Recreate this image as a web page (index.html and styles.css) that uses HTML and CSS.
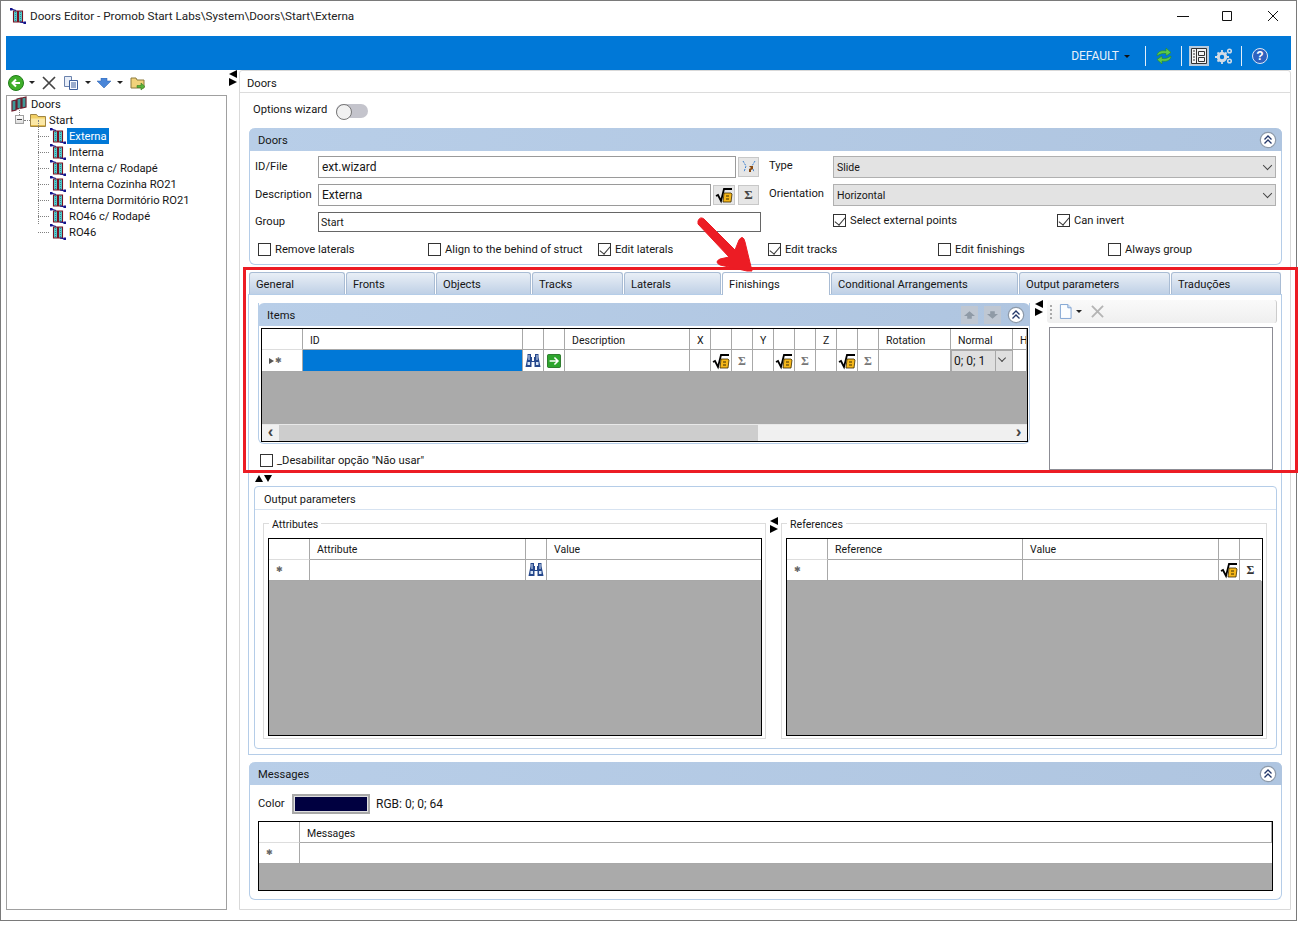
FILE: index.html
```html
<!DOCTYPE html>
<html lang="en">
<head>
<meta charset="utf-8">
<title>Doors Editor</title>
<link rel="stylesheet" href="styles.css">
</head>
<body>
<svg class="sprite" aria-hidden="true">
  <symbol id="door" viewBox="0 0 16 16">
    <path d="M3.500 3h4v11h-4zM8.500 3h4v11h-4z" fill="#58d0d0" stroke="#7a1020" stroke-width="1.100"/>
    <path d="M5.500 4v9M10.500 4v9" stroke="#2a8a9a" stroke-width="1" stroke-dasharray="1 1"/>
    <path d="M1 1l5 1.500M10 14l5 1" stroke="#14148c" stroke-width="1.100"/>
    <path d="M0 0h2.500v2.500H0zM13.500 13.500H16V16h-2.500z" fill="#14148c"/>
  </symbol>
  <symbol id="doors" viewBox="0 0 16 16">
    <path d="M1 5l4-1v10l-4 1zM6 3l4-1v10l-4 1zM11 2l4-1v10l-4 1z" fill="#3f9a98" stroke="#6c1c2c" stroke-width="1.200"/>
  </symbol>
  <symbol id="folder" viewBox="0 0 16 16">
    <path d="M.5 2.500h6l1.500 2h7.500v10H.5z" fill="#f2cf64" stroke="#a08646"/>
    <path d="M1 6.500h14v7.500H1z" fill="#fbe8a6"/>
    <path d="M1 13h14v1H1z" fill="#e2b94a"/>
  </symbol>
  <symbol id="sqrt" viewBox="0 0 18 18">
    <path d="M1 10l2-1 3 6 3-12h8" fill="none" stroke="#000" stroke-width="1.800"/>
    <path d="M9 7h7l1 1-1 8H8z" fill="#f5b71a" stroke="#3a2a00" stroke-width=".8"/>
    <path d="M11 10h3M11 13h3" stroke="#3a2a00" stroke-width="1"/>
  </symbol>
  <symbol id="bino" viewBox="0 0 16 16">
    <path d="M2.500 1h3.500v3h1v4h2V4h1V1h3.500v3l2 10H9.500V9h-3v5H.5l2-10z" fill="#26488c"/>
    <path d="M3.500 2h1v5h-1zM11.500 2h1v5h-1zM2.500 9h2.500v3H2.500zM11 9h2.500v3H11z" fill="#d6e4f6"/>
  </symbol>
  <symbol id="greenarrow" viewBox="0 0 16 16">
    <rect x=".5" y=".5" width="15" height="15" rx="1.500" fill="#2ea52e" stroke="#1c6c1c"/>
    <path d="M3 8h9M8.500 4l4 4-4 4" fill="none" stroke="#fff" stroke-width="1.800"/>
  </symbol>
  <symbol id="collapse" viewBox="0 0 18 18">
    <circle cx="9" cy="9" r="7.700" fill="#fff" stroke="#8d9aaa" stroke-width="1.200"/>
    <path d="M5.500 8.500L9 5l3.500 3.500M5.500 12.500L9 9l3.500 3.500" fill="none" stroke="#24386a" stroke-width="1.300"/>
  </symbol>
</svg>

<div class="window">
  <header class="titlebar">
    <svg class="ico16 title-ico"><use href="#door"/></svg>
    <span class="title-text">Doors Editor - Promob Start Labs\System\Doors\Start\Externa</span>
    <div class="winctl">
      <svg class="winbtn" viewBox="0 0 46 14"><path d="M19 7.500h12" stroke="#111" fill="none"/></svg>
      <svg class="winbtn" viewBox="0 0 46 14"><path d="M18.500 2.500h9v9h-9z" stroke="#111" fill="none"/></svg>
      <svg class="winbtn" viewBox="0 0 46 14"><path d="M18 2l10 10M28 2L18 12" stroke="#111" fill="none"/></svg>
    </div>
  </header>

  <div class="ribbon">
    <span class="rib-text">DEFAULT</span>
    <span class="caret white"></span>
    <span class="rib-sep first"></span>
    <svg class="rib-ico sync" viewBox="0 0 18 18">
      <path d="M2 9c0-4 4-6 9-5V1l5 4.500L11 9V6.500C7 6 5 7 2 9z" fill="#5cc94a" stroke="#2c8a22" stroke-width=".6"/>
      <path d="M16 9c0 4-4 6-9 5v3l-5-4.500L7 9v2.500c4 .5 6-.5 9-2.500z" fill="#5cc94a" stroke="#2c8a22" stroke-width=".6"/>
    </svg>
    <span class="rib-sep"></span>
    <span class="rib-view">
      <svg viewBox="0 0 18 18" class="rib-ico"><path d="M1.500 1.500h15v15h-15z" fill="#f4f4f4" stroke="#333"/><path d="M6.500 1.500v15M8.500 4.500h6v4h-6zM8.500 10.500h6v4h-6z" fill="none" stroke="#333"/><path d="M3 4h2M3 7h2M3 10h2M3 13h2" stroke="#333"/></svg>
    </span>
    <svg class="rib-ico gears" viewBox="0 0 18 18">
      <circle cx="7" cy="10" r="3.700" fill="none" stroke="#d3dce6" stroke-width="3"/>
      <circle cx="14.500" cy="4" r="1.800" fill="none" stroke="#d3dce6" stroke-width="1.500"/>
      <circle cx="14.500" cy="14" r="1.800" fill="none" stroke="#d3dce6" stroke-width="1.500"/>
      <path d="M7 3v3M7 14v3M0 10h3M11 10h3M2.500 5.500l2 2M11.500 5.500l-2 2M2.500 14.500l2-2" stroke="#d3dce6" stroke-width="1.800"/>
    </svg>
    <span class="rib-sep"></span>
    <span class="help">?</span>
  </div>

  <div class="main">
    <aside class="side">
      <div class="side-tools">
        <span class="back"><svg viewBox="0 0 16 16"><circle cx="8" cy="8" r="7.500" fill="#3fae2a" stroke="#1f7d18"/><path d="M12 8H5M8 4.500L4.500 8 8 11.500" fill="none" stroke="#fff" stroke-width="2"/></svg></span>
        <span class="caret t1"></span>
        <svg class="tool-x" viewBox="0 0 14 14"><path d="M1 1l12 12M13 1L1 13" stroke="#444" stroke-width="1.700"/></svg>
        <svg class="tool-copy" viewBox="0 0 16 16"><path d="M1.500 1.500h7v10h-7z" fill="#e8eef8" stroke="#6b82ac"/><path d="M6.500 5.500h8v9h-8z" fill="#f8fbff" stroke="#3d5f9c"/><path d="M8 8h5M8 10h5M8 12h5" stroke="#3d5f9c"/></svg>
        <span class="caret t2"></span>
        <svg class="tool-down" viewBox="0 0 14 10"><path d="M4 0h6v3h4l-7 7-7-7h4z" fill="#4a86d8" stroke="#2b5fae" stroke-width=".5"/></svg>
        <span class="caret t3"></span>
        <svg class="tool-folder" viewBox="0 0 16 16"><path d="M1 3h5l1 2h7v8H1z" fill="#f2d27a" stroke="#8c7a3c"/><path d="M7 10.500h4V8l4 3.500L11 15v-2.500H7z" fill="#59b33b" stroke="#357c22" stroke-width=".6"/></svg>
      </div>
      <div class="tree">
        <div class="node root"><svg class="ico16"><use href="#doors"/></svg><span class="lbl">Doors</span></div>
        <div class="node folder-node">
          <span class="expander"></span>
          <svg class="ico16"><use href="#folder"/></svg><span class="lbl folder-lbl">Start</span>
        </div>
        <div class="children">
          <div class="node child"><svg class="ico16"><use href="#door"/></svg><span class="lbl selected">Externa</span></div>
          <div class="node child"><svg class="ico16"><use href="#door"/></svg><span class="lbl">Interna</span></div>
          <div class="node child"><svg class="ico16"><use href="#door"/></svg><span class="lbl">Interna c/ Rodapé</span></div>
          <div class="node child"><svg class="ico16"><use href="#door"/></svg><span class="lbl">Interna Cozinha RO21</span></div>
          <div class="node child"><svg class="ico16"><use href="#door"/></svg><span class="lbl">Interna Dormitório RO21</span></div>
          <div class="node child"><svg class="ico16"><use href="#door"/></svg><span class="lbl">RO46 c/ Rodapé</span></div>
          <div class="node child"><svg class="ico16"><use href="#door"/></svg><span class="lbl">RO46</span></div>
        </div>
      </div>
    </aside>

    <div class="split-h main-split"><i class="tri-l"></i><i class="tri-r"></i></div>

    <section class="content">
      <div class="content-head">Doors</div>
      <div class="options"><span class="opt-lbl">Options wizard</span><span class="toggle"></span></div>

      <div class="panel doors-panel">
        <div class="panel-head"><span>Doors</span><svg class="collapse"><use href="#collapse"/></svg></div>
        <div class="doors-form">
          <div class="form-left">
            <div class="frow short">
              <label class="flabel">ID/File</label>
              <span class="input grow">ext.wizard</span>
              <span class="btn wiz"><svg viewBox="0 0 18 18"><path d="M3 3l3 5-2 6M15 3l-3 5 2 6" fill="none" stroke="#3a7fd0" stroke-dasharray="2 1"/><path d="M9 8h4v3l-2 1v2H9v-3l2-1z" fill="#8a4a10"/></svg></span>
            </div>
            <div class="frow short">
              <label class="flabel">Description</label>
              <span class="input grow">Externa</span>
              <span class="btn sq"><svg><use href="#sqrt"/></svg></span>
              <span class="btn sig">Σ</span>
            </div>
            <div class="frow group-row">
              <label class="flabel tight">Group</label>
              <span class="input dark grow">Start</span>
            </div>
          </div>
          <div class="form-right">
            <div class="frow">
              <label class="rlabel">Type</label>
              <span class="select">Slide<i class="chev"></i></span>
            </div>
            <div class="frow">
              <label class="rlabel">Orientation</label>
              <span class="select">Horizontal<i class="chev"></i></span>
            </div>
            <div class="frow checks-right">
              <span class="check c224"><i class="box on"></i>Select external points</span>
              <span class="check"><i class="box on"></i>Can invert</span>
            </div>
          </div>
        </div>
        <div class="checkrow">
          <span class="check"><i class="box"></i>Remove laterals</span>
          <span class="check"><i class="box"></i>Align to the behind of struct</span>
          <span class="check"><i class="box on"></i>Edit laterals</span>
          <span class="check"><i class="box on"></i>Edit tracks</span>
          <span class="check"><i class="box"></i>Edit finishings</span>
          <span class="check"><i class="box"></i>Always group</span>
        </div>
      </div>

      <nav class="tabs">
        <span class="tab w96">General</span>
        <span class="tab w89">Fronts</span>
        <span class="tab w95">Objects</span>
        <span class="tab w91">Tracks</span>
        <span class="tab w97">Laterals</span>
        <span class="tab active w109">Finishings</span>
        <span class="tab w187">Conditional Arrangements</span>
        <span class="tab w151">Output parameters</span>
        <span class="tab w110">Traduções</span>
      </nav>

      <div class="tab-body">
        <div class="finish-row">
          <div class="finish-left">
            <div class="panel items-panel">
              <div class="panel-head items-head">
                <span>Items</span>
                <span class="mv"><svg viewBox="0 0 12 8"><path d="M0 5l6-5 6 5H8.500v3h-5V5z" fill="#8f9aa6"/></svg></span>
                <span class="mv"><svg viewBox="0 0 12 8"><path d="M0 3l6 5 6-5H8.500V0h-5v3z" fill="#8f9aa6"/></svg></span>
                <svg class="collapse"><use href="#collapse"/></svg>
              </div>
              <div class="grid items-grid">
                <div class="gh items-cols">
                  <span></span><span class="t">ID</span><span></span><span></span><span class="t">Description</span>
                  <span class="t">X</span><span></span><span></span><span class="t">Y</span><span></span><span></span><span class="t">Z</span><span></span><span></span>
                  <span class="t">Rotation</span><span class="t">Normal</span><span class="t">H</span>
                </div>
                <div class="gr items-cols tall">
                  <span class="rh"><i class="rh-tri"></i>✱</span>
                  <span class="cellsel"></span>
                  <span class="ic"><svg class="ico16"><use href="#bino"/></svg></span>
                  <span class="ic"><svg class="ico14"><use href="#greenarrow"/></svg></span>
                  <span></span>
                  <span></span><span class="ic"><svg class="ico18"><use href="#sqrt"/></svg></span><span class="ic sg">Σ</span>
                  <span></span><span class="ic"><svg class="ico18"><use href="#sqrt"/></svg></span><span class="ic sg">Σ</span>
                  <span></span><span class="ic"><svg class="ico18"><use href="#sqrt"/></svg></span><span class="ic sg">Σ</span>
                  <span></span>
                  <span class="combo"><b>0; 0; 1</b><i class="chev small"></i></span>
                  <span></span>
                </div>
                <div class="gray g52"></div>
                <div class="scrollbar">
                  <span class="sb-btn">‹</span><span class="sb-thumb"></span><span class="sb-track"></span><span class="sb-btn">›</span>
                </div>
              </div>
            </div>
            <div class="disable-row"><span class="check"><i class="box"></i>_Desabilitar opção "Não usar"</span></div>
          </div>
          <div class="split-h list-split"><i class="tri-l"></i><i class="tri-r"></i></div>
          <div class="finish-right">
            <div class="list-tools">
              <span class="grip"></span>
              <svg class="newdoc" viewBox="0 0 14 16"><path d="M1.500 .5h8l3.500 3.500v11.500h-11.500z" fill="#fbfdff" stroke="#7aa0d0"/><path d="M9.500 .5v3.500H13" fill="#cfe0f4" stroke="#7aa0d0"/></svg>
              <span class="caret t4"></span>
              <svg class="tool-x2" viewBox="0 0 14 14"><path d="M1 1l12 12M13 1L1 13" stroke="#b4b4b4" stroke-width="2"/></svg>
            </div>
            <div class="listbox"></div>
          </div>
        </div>

        <div class="split-v"><i class="tri-u"></i><i class="tri-d"></i></div>

        <div class="output">
          <div class="output-head">Output parameters</div>
          <div class="output-body">
            <div class="fs fs-attr">
              <span class="legend">Attributes</span>
              <div class="grid out-grid">
                <div class="gh attr-cols"><span></span><span class="t">Attribute</span><span></span><span class="t">Value</span></div>
                <div class="gr attr-cols"><span class="rh">✱</span><span></span><span class="ic"><svg class="ico16"><use href="#bino"/></svg></span><span class="noline"></span></div>
                <div class="gray fill"></div>
              </div>
            </div>
            <div class="split-h ref-split"><i class="tri-l"></i><i class="tri-r"></i></div>
            <div class="fs fs-ref">
              <span class="legend">References</span>
              <div class="grid out-grid">
                <div class="gh ref-cols"><span></span><span class="t">Reference</span><span class="t">Value</span><span></span><span class="noline"></span></div>
                <div class="gr ref-cols"><span class="rh">✱</span><span></span><span></span><span class="ic"><svg class="ico18"><use href="#sqrt"/></svg></span><span class="ic sg dark noline">Σ</span></div>
                <div class="gray fill"></div>
              </div>
            </div>
          </div>
        </div>
      </div>

      <div class="panel msg-panel">
        <div class="panel-head"><span>Messages</span><svg class="collapse"><use href="#collapse"/></svg></div>
        <div class="color-row">
          <span class="color-lbl">Color</span>
          <span class="swatch"></span>
          <span class="rgb">RGB: 0; 0; 64</span>
        </div>
        <div class="grid msg-grid">
          <div class="gh msg-cols"><span></span><span class="t">Messages</span></div>
          <div class="gr msg-cols"><span class="rh">✱</span><span class="noline"></span></div>
          <div class="gray fill"></div>
        </div>
      </div>
    </section>
  </div>
</div>

<div class="callout-box"></div>
<svg class="callout-arrow" viewBox="0 0 70 70">
  <path d="M6 6Q8 1 12 4L43 35 47 25Q51 19 53 27L60 56 55 56 28 50Q22 47 28 44L37 42 6 9Z" fill="#ec1c24" stroke="#ec1c24" stroke-linejoin="round"/>
</svg>
</body>
</html>
```

FILE: styles.css
```css
* { box-sizing: border-box; }
html, body { margin: 0; padding: 0; background: #fff; }
body {
  position: relative;
  width: 1302px;
  height: 928px;
  overflow: hidden;
  font: 11.2px/16px Roboto, "Open Sans", "Liberation Sans", sans-serif;
  color: #161616;
}
i { font-style: normal; display: block; }
.sprite { position: absolute; width: 0; height: 0; }
.ico16 { width: 16px; height: 16px; flex: none; display: block; }
.ico14 { width: 14px; height: 14px; display: block; }
.ico18 { width: 18px; height: 18px; display: block; }

.window {
  width: 1297px;
  height: 921px;
  border: 1px solid #7a7a7a;
  display: flex;
  flex-direction: column;
}
.titlebar { height: 35px; display: flex; align-items: center; flex: none; padding-bottom: 5px; }
.title-ico { margin-left: 9px; }
.title-text { margin-left: 4px; color: #222; font-size: 11.7px; }
.winctl { margin-left: auto; display: flex; }
.winbtn { width: 46px; height: 14px; display: block; }

.ribbon {
  height: 34px;
  flex: none;
  margin: 0 5px;
  background: #0078d7;
  display: flex;
  align-items: center;
  padding: 6px 23px 0 0;
  justify-content: flex-end;
}
.rib-text { color: #e8f1fa; font-size: 12px; }
.caret { display: block; width: 0; height: 0; border: 3px solid transparent; border-top: 3px solid #222; border-bottom: 0; }
.caret.white { margin-left: 5px; border-top-color: #111; }
.rib-sep { width: 1px; height: 20px; background: #e2eef9; margin: 0 7px 0 8px; }
.rib-sep.first { margin-left: 15px; margin-right: 9px; }
.rib-ico { width: 18px; height: 18px; display: block; }
.rib-view { width: 20px; height: 20px; background: #b9cbdd; display: flex; align-items: center; justify-content: center; margin-right: 6px; }
.help {
  width: 16px; height: 16px; border-radius: 50%;
  background: #2e62c0; border: 1px solid #dfe8f5; color: #fff;
  font: bold 12px/14px "Liberation Sans", sans-serif; text-align: center; margin-left: 3px;
}

.main { flex: 1; display: flex; padding: 0 5px 10px; min-height: 0; }
.side { width: 221px; flex: none; display: flex; flex-direction: column; }
.side-tools { height: 25px; flex: none; display: flex; align-items: center; padding-left: 2px; }
.back svg { width: 16px; height: 16px; display: block; }
.t1 { margin-left: 5px; }
.tool-x { width: 14px; height: 14px; margin-left: 7px; }
.tool-copy { width: 16px; height: 16px; margin-left: 7px; }
.t2 { margin-left: 6px; }
.tool-down { width: 14px; height: 10px; margin-left: 6px; }
.t3 { margin-left: 6px; }
.tool-folder { width: 16px; height: 16px; margin-left: 7px; }

.tree { flex: 1; border: 1px solid #a0a0a0; background: #fff; }
.node { height: 16px; display: flex; align-items: center; position: relative; }
.root { padding-left: 4px; }
.root .lbl { margin-left: 2px; }
.folder-node { padding-left: 23px; }
.folder-lbl { margin-left: 3px; }
.expander {
  position: absolute; left: 8px; top: 3px; width: 9px; height: 9px;
  border: 1px solid #a0a0a0; background: linear-gradient(#fff, #ddd);
}
.expander::after { content: ""; position: absolute; left: 1px; top: 3px; width: 5px; height: 1px; background: #444; }
.folder-node::before { content: ""; position: absolute; left: 12px; top: -4px; height: 7px; border-left: 1px dotted #808080; }
.folder-node::after { content: ""; position: absolute; left: 17px; top: 8px; width: 6px; border-top: 1px dotted #808080; }
.children { position: relative; }
.children::before { content: ""; position: absolute; left: 31px; top: -8px; height: 104px; border-left: 1px dotted #808080; }
.child { padding-left: 43px; }
.child::before { content: ""; position: absolute; left: 31px; top: 8px; width: 11px; border-top: 1px dotted #808080; }
.lbl { padding: 2px 2px 0; line-height: 14px; height: 16px; margin-left: 1px; white-space: nowrap; }
.selected { background: #0078d7; color: #fff; }

.split-h { flex: none; display: flex; flex-direction: column; }
.main-split { width: 12px; padding: 0 0 0 2px; }
.tri-l { width: 0; height: 0; border: 4.500px solid transparent; border-right: 8px solid #000; border-left: 0; }
.tri-r { width: 0; height: 0; border: 4.500px solid transparent; border-left: 8px solid #000; border-right: 0; }

.content {
  width: 1052px; flex: none;
  border: 1px solid #d9d9d9; border-top-left-radius: 3px; border-top-right-radius: 3px;
  padding-left: 9px; padding-right: 8px;
}
.content-head { height: 22px; margin: 0 -8px 0 -9px; padding: 5px 0 0 7px; border-bottom: 1px solid #dcdcdc; }
.options { height: 35px; display: flex; align-items: center; padding-left: 4px; padding-bottom: 2px; }
.opt-lbl { width: 83px; flex: none; margin-top: 1px; }
.toggle { width: 32px; height: 14px; border-radius: 7px; background: #c4c4cc; position: relative; margin-top: 2px; }
.toggle::before {
  content: ""; position: absolute; left: 0; top: 0; width: 14px; height: 14px; border-radius: 50%;
  background: #f1f1f1; border: 1px solid #777;
}

.panel { border: 1px solid #b5cde8; border-top: 0; border-radius: 6px; background: #fff; }
.panel-head {
  height: 23px; background: linear-gradient(90deg, #b8cee8, #afc5e0);
  margin: 0 -1px; padding: 0 5px 0 9px; border-radius: 6px 6px 0 0;
  display: flex; align-items: center; justify-content: space-between;
}
.panel-head > span:first-child { padding-top: 2px; }
.collapse { width: 18px; height: 18px; display: block; }
.doors-panel { width: 1033px; height: 137px; }
.doors-form { display: flex; padding: 5px 5px 0 5px; height: 88px; }
.form-left { width: 506px; flex: none; }
.form-right { width: 507px; margin-left: 8px; flex: none; }
.frow { display: flex; height: 22px; margin-bottom: 6px; align-items: flex-start; }
.frow.short { padding-right: 2px; }
.flabel { width: 63px; flex: none; line-height: 22px; }
.flabel.tight { line-height: 20px; }
.rlabel { width: 64px; flex: none; line-height: 20px; }
.input { height: 22px; border: 1px solid #9a9a9a; padding: 0 3px; line-height: 20px; background: #fff; font-size: 12px; }
.input.dark { border-color: #666; height: 20px; line-height: 17px; padding: 1px 2px 0; font-size: 10.6px; }
.group-row { height: 20px; }
.grow { flex: 1; min-width: 0; }
.btn {
  width: 21px; height: 20px; flex: none; background: #e6e6e6; border: 1px solid #c8c8c8;
  margin: 1px 0 0 2px; display: flex; align-items: center; justify-content: center;
}
.btn svg { width: 18px; height: 18px; display: block; }
.btn.sq { width: 22px; }
.btn.sig { margin-left: 3px; font: bold 13px/16px "Liberation Serif", serif; color: #444; }
.select {
  flex: 1; height: 22px; background: #e3e3e3; border: 1px solid #b0b0b0; line-height: 19px;
  padding: 1px 3px 0; position: relative; font-size: 10.5px;
}
.chev {
  position: absolute; right: 4px; top: 5px; width: 7px; height: 7px;
  border-right: 1px solid #444; border-bottom: 1px solid #444; transform: rotate(45deg) scale(.95);
}
.chev.small { right: 7px; top: 4px; width: 6px; height: 6px; }
.checks-right { margin-top: 6px; padding-left: 64px; }
.c224 { width: 224px; flex: none; }
.check { display: flex; align-items: center; white-space: nowrap; padding-top: 1px; }
.box { width: 13px; height: 13px; border: 1px solid #333; margin: -2px 4px 0 0; flex: none; position: relative; background: #fff; }
.box.on::after {
  content: ""; position: absolute; left: 3px; top: 0; width: 5px; height: 9px;
  border-right: 1px solid #333; border-bottom: 1px solid #333; transform: rotate(40deg);
}
.checkrow { display: grid; grid-template-columns: repeat(6, 170px); padding: 0 0 0 8px; margin-top: 2px; }

.tabs { display: flex; margin-top: 7px; height: 22px; position: relative; width: 1033px; }
.tab {
  height: 22px; padding: 4px 0 0 6px; flex: none; margin-right: 1px;
  border: 1px solid #a9bcd4; border-bottom: 0; border-radius: 3px 3px 0 0;
  background: linear-gradient(#e9eff6, #bfd0e6);
}
.tab.active { background: #fff; border-color: #a9bcd4; height: 23px; z-index: 1; }
.w96 { width: 96px; } .w89 { width: 89px; } .w95 { width: 95px; } .w91 { width: 91px; } .w97 { width: 97px; }
.w109 { width: 108px; } .w187 { width: 187px; } .w151 { width: 151px; } .w110 { width: 110px; }

.tab-body {
  margin-left: -1px; width: 1034px; height: 461px;
  border: 1px solid #b5cde8;
  padding-top: 8px;
}
.finish-row { display: flex; height: 167px; padding-left: 9px; }
.finish-left { width: 772px; flex: none; }
.items-panel { height: 141px; border-radius: 0 0 6px 6px; }
.items-head { height: 23px; justify-content: flex-start; gap: 6px; padding-right: 5px; }
.items-head > span:first-child { margin-right: auto; }
.mv { width: 17px; height: 18px; background: #bfc7d2; display: flex; align-items: center; justify-content: center; }
.mv svg { width: 11px; height: 8px; display: block; }
.items-grid { margin: 2px 0 0 2px; width: 767px; height: 114px; }

.grid { border: 1px solid #000; display: flex; flex-direction: column; overflow: hidden; background: #aaa; }
.gh, .gr { display: grid; flex: none; background: #fff; }
.gh { height: 21px; font-size: 10.5px; }
.gr { height: 21px; }
.gr.tall { height: 22px; }
.gh > span, .gr > span { border-right: 1px solid #a8a8a8; border-bottom: 1px solid #a8a8a8; min-width: 0; overflow: hidden; white-space: nowrap; }
.gh > span { padding-top: 4px; }
.out-grid .gh > span { padding-top: 3px; }
.gh > .t { padding-left: 7px; }
.gh > span:first-child { border-bottom: 1px solid #ddd; }
.noline { border-right: 0 !important; }
.items-cols { grid-template-columns: 41px 220px 21px 21px 125px repeat(9, 21px) 72px 62px 14px; width: 765px; }
.attr-cols { grid-template-columns: 41px 216px 21px 215px; }
.ref-cols { grid-template-columns: 41px 195px 196px 21px 21px; }
.msg-cols { grid-template-columns: 41px 972px; }
.rh { color: #666; font-size: 8px; line-height: 20px; display: flex; align-items: center; padding-left: 7px; gap: 1px; }
.rh-tri { width: 0; height: 0; border: 3.500px solid transparent; border-left: 5px solid #555; border-right: 0; }
.cellsel { background: #0078d7; }
.ic { display: flex; align-items: center; justify-content: center; }
.sg { font: bold 12px/16px "Liberation Serif", serif; color: #777; }
.sg.dark { color: #333; }
.combo { position: relative; background: #dfdfdf; border: 1px solid #a8a8a8 !important; padding-left: 2px; line-height: 20px; font-size: 12px; }
.combo b { font-weight: 400; }
.combo::after { content: ""; position: absolute; right: 16px; top: 0; bottom: 0; width: 1px; background: #a8a8a8; }
.gray { background: #aaa; flex: none; }
.g52 { height: 52px; }
.fill { flex: 1; }
.scrollbar { height: 17px; background: #f0f0f0; display: flex; flex: none; border-top: 1px solid #e8e8e8; }
.sb-btn { width: 17px; text-align: center; font: bold 17px/13px "Liberation Sans", sans-serif; color: #444; flex: none; }
.sb-thumb { width: 479px; background: #cdcdcd; flex: none; }
.sb-track { flex: 1; }
.disable-row { padding: 8px 0 0 2px; }

.list-split { width: 17px; padding-left: 5px; margin-top: -3px; }
.finish-right { flex: none; width: 230px; margin-top: -3px; }
.list-tools {
  height: 23px; background: linear-gradient(#fafafa, #efefef); border-radius: 3px;
  border-right: 1px solid #ccc; display: flex; align-items: center; padding-left: 3px;
}
.grip { width: 2px; height: 14px; background: repeating-linear-gradient(#aaa 0 2px, transparent 2px 4px); }
.newdoc { width: 13px; height: 15px; margin-left: 7px; }
.t4 { margin-left: 4px; }
.tool-x2 { width: 13px; height: 13px; margin-left: 9px; }
.listbox { margin: 4px 0 0 2px; width: 224px; height: 143px; border: 1px solid #8c8c94; background: #fff; }

.split-v { display: flex; height: 13px; padding: 5px 0 0 6px; }
.tri-u { width: 0; height: 0; border: 4px solid transparent; border-bottom: 7px solid #000; border-top: 0; }
.tri-d { width: 0; height: 0; border: 4px solid transparent; border-top: 7px solid #000; border-bottom: 0; margin-left: 1px; }

.output {
  margin: 3px 0 0 5px; width: 1023px; height: 263px;
  border: 1px solid #b5cde8; border-radius: 4px;
}
.output-head { height: 23px; padding: 5px 0 0 9px; border-bottom: 1px solid #d7e3f1; font-size: 11px; }
.output-body { display: flex; padding: 13px 8px 0; height: 239px; }
.fs { border: 1px solid #dcdcdc; height: 216px; flex: none; padding: 14px 3px 0 4px; position: relative; }
.fs-attr { width: 503px; }
.fs-ref { width: 486px; }
.ref-split { width: 15px; padding-left: 4px; margin-top: -6px; }
.legend { position: absolute; left: 5px; top: -7px; background: #fff; padding: 0 3px; line-height: 15px; font-size: 10.6px; }
.out-grid { height: 198px; }

.msg-panel { width: 1033px; height: 138px; margin-top: 7px; }
.color-row { height: 36px; display: flex; align-items: center; padding: 1px 0 0 8px; }
.color-lbl { width: 34px; flex: none; }
.rgb { font-size: 12px; }
.swatch { width: 78px; height: 20px; margin-right: 6px; background: #000040; border: 2px solid #a8a8a8; outline: 1px solid #e0e0e0; outline-offset: -3px; }
.msg-grid { margin-left: 8px; width: 1015px; height: 70px; }

.callout-box {
  position: absolute; left: 243px; top: 267px; width: 1055px; height: 206px;
  border: 3px solid #ec1c24; pointer-events: none;
}
.callout-arrow { position: absolute; left: 692px; top: 215px; width: 70px; height: 70px; }
```
